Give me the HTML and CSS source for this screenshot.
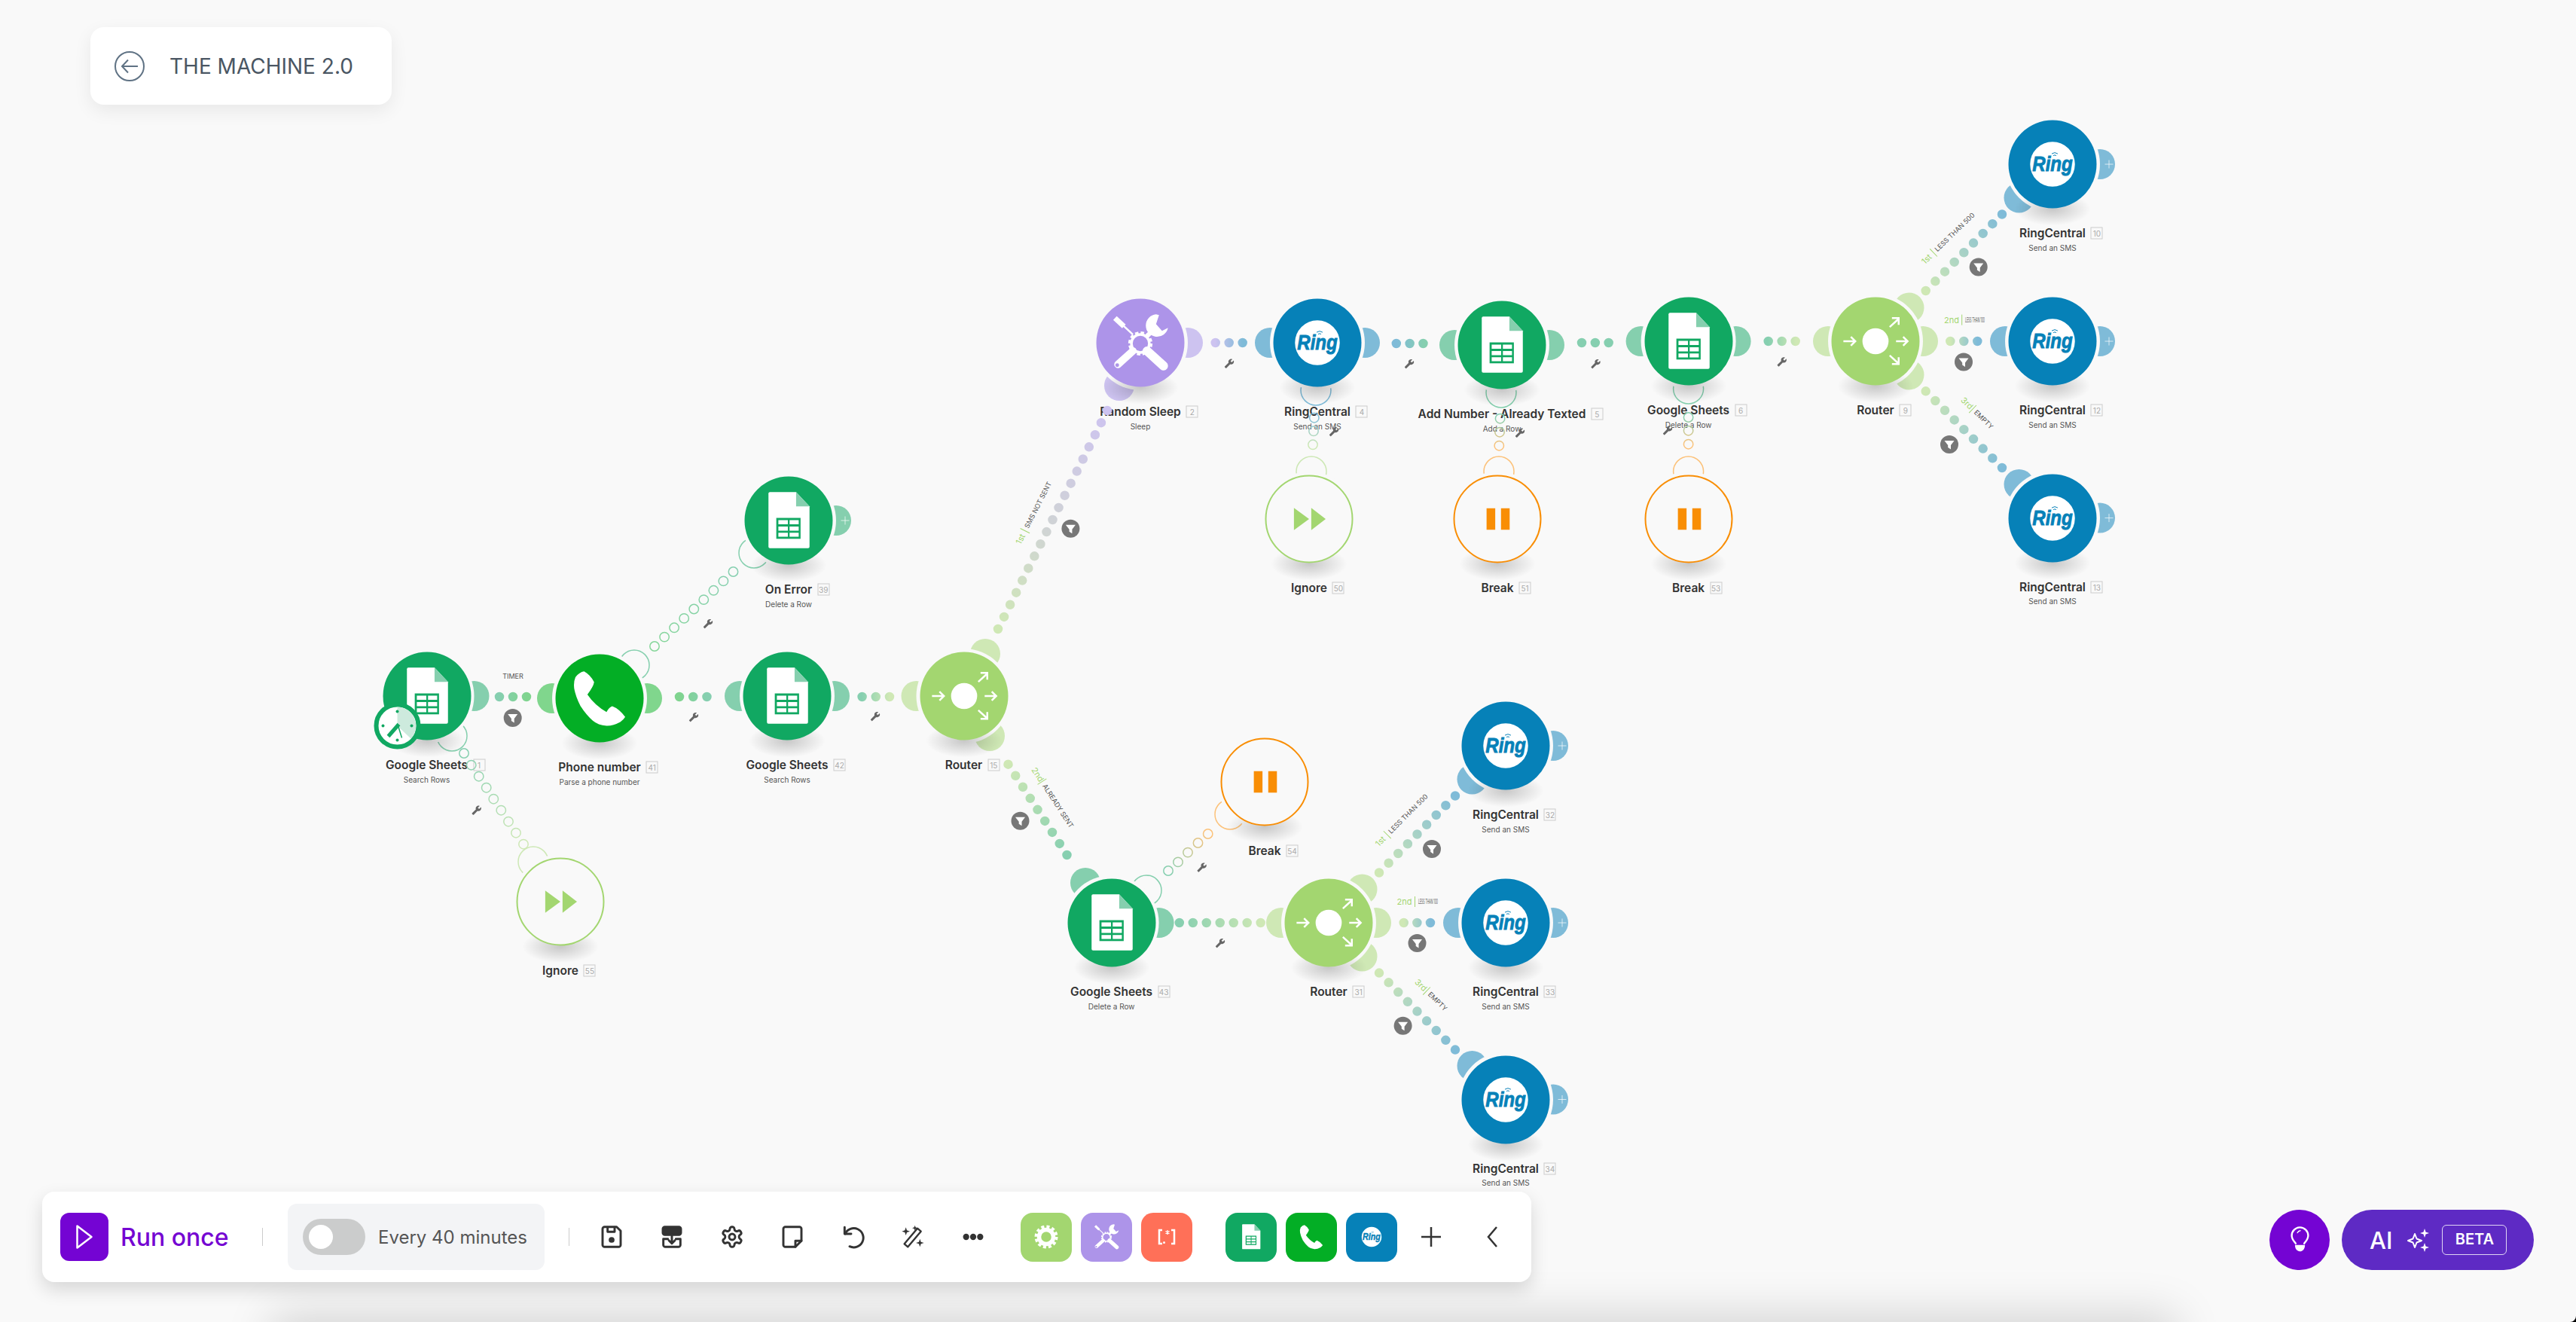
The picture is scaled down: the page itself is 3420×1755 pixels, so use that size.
FILE: index.html
```html
<!DOCTYPE html>
<html lang="en">
<head>
  <meta charset="UTF-8" />
  <title>THE MACHINE 2.0</title>
  <link rel="stylesheet" href="styles.css">
</head>
<body>
  <!-- shared icons and gradients -->
  <svg class="defs" aria-hidden="true">
    <defs>
      <symbol id="sheets" viewBox="-59 -59 118 118">
        <path fill="#fff" d="M-25 -38H10L28 -19V35Q28 37 26 37H-25Q-27 37 -27 35V-36Q-27 -38 -25 -38Z"/>
        <path fill="#85cfae" d="M10 -38L28 -19H10Z"/>
        <rect x="-16.5" y="-3.5" width="32.5" height="28" fill="#11a862"/>
        <path fill="#fff" d="M-13.7 -.5H-1V5H-13.7ZM1.3 -.5H13.5V5H1.3ZM-13.7 8H-1V13.5H-13.7ZM1.3 8H13.5V13.5H1.3ZM-13.7 16.3H-1V21.7H-13.7ZM1.3 16.3H13.5V21.7H1.3Z"/>
      </symbol>
      <symbol id="phone" viewBox="-59 -59 118 118">
        <path fill="#fff" d="M-20.7 -36Q-12 -31 -7.3 -21.7Q-8 -16 -16.3 -5Q-6 10 9.3 18.3Q13 12 17 10.7Q26 14 34.3 25Q32 29 27.7 31.7Q18 37 9.3 36.7Q-2 36 -9 30Q-18 22 -25.7 10Q-32 -2 -34 -13.3Q-35 -22 -32.3 -28.3Q-27 -35 -20.7 -36Z"/>
      </symbol>
      <symbol id="ring" viewBox="-59 -59 118 118">
        <circle r="30" fill="#fff"/>
        <text class="ring-word" y="9.5" text-anchor="middle" textLength="54" lengthAdjust="spacingAndGlyphs">Ring</text>
        <path fill="none" stroke="#0681b8" stroke-width="1" d="M-1 -14Q3 -17 7 -14M1 -11.5Q3 -13 5 -11.5"/>
      </symbol>
      <symbol id="router" viewBox="-59 -59 118 118">
        <circle r="17.5" fill="#fff"/>
        <path fill="none" stroke="#fff" stroke-width="2.5" d="M-43 0H-27M-33 -6L-27 0L-33 6M27.5 0H43M37 -6L43 0L37 6M19 -19L31 -30M22 -31H31V-22M19 19L31 30M22 30.5H31V21.5"/>
      </symbol>
      <symbol id="tools" viewBox="-59 -59 118 118">
        <g stroke="#fff" fill="none">
          <path stroke-width="7" d="M-34 -33L-22 -22"/>
          <path stroke-width="2.5" d="M-23 -23L-10 -11"/>
          <path stroke-width="12" stroke-linecap="round" d="M9 11L31 31"/>
          <path stroke-width="10" stroke-linecap="round" d="M-10 11L-30 29"/>
          <path stroke-width="6" d="M8 -8L16 -16"/>
          <circle cy="1" r="12" stroke-width="3.5"/>
          <circle cy="1" r="14.5" stroke-width="3.5" stroke-dasharray="4.5 3.09"/>
        </g>
        <circle cx="-31" cy="30" r="2.5" fill="#ad94e9"/>
        <path fill="#fff" d="M21 -38A15 15 0 1 0 37 -20L29 -16L21 -25L25 -37Z"/>
      </symbol>
      <symbol id="skip" viewBox="-59 -59 118 118">
        <path fill="#a3d670" d="M-21 -15.5L0 0L-21 15.5ZM3 -15.5L23 0L3 15.5Z"/>
      </symbol>
      <symbol id="pause" viewBox="-59 -59 118 118">
        <path fill="#f98e05" d="M-15 -15H-3V15H-15ZM5 -15H17V15H5Z"/>
      </symbol>
      <symbol id="cog" viewBox="-26 -26 52 52">
        <circle r="9.5" fill="none" stroke="#fff" stroke-width="5.5"/>
        <circle r="13.5" fill="none" stroke="#fff" stroke-width="4" stroke-dasharray="4 3.07"/>
      </symbol>
      <symbol id="array" viewBox="-26 -26 52 52">
        <path fill="none" stroke="#fff" stroke-width="2.5" d="M-6 -9H-10V9H-6M6 -9H10V9H6"/>
        <path fill="none" stroke="#fff" stroke-width="1.3" d="M1 -9V-3M-1.6 -7.5L3.6 -4.5M3.6 -7.5L-1.6 -4.5"/>
        <circle cx="-3.5" cy="7.5" r="1.5" fill="#fff"/>
      </symbol>
      <g id="wrench"><path fill="#666" transform="scale(-.56 .56) translate(-12 -12)" d="M22.7 19l-9.1-9.1c.9-2.3.4-5-1.5-6.9-2-2-5-2.4-7.4-1.3L9 6 6 9 1.6 4.7C.4 7.1.9 10.1 2.9 12.1c1.9 1.9 4.6 2.4 6.9 1.5l9.1 9.1c.4.4 1 .4 1.4 0l2.3-2.3c.5-.4.5-1.1.1-1.4z"/></g>
      <g id="funnel"><circle r="12" fill="#777"/><path fill="#fff" d="M-6.5 -5H6.5L2 1V6.5L-1.8 4V1Z"/></g>

      <linearGradient id="to-blue"><stop offset="0" stop-color="#cfe8b5"/><stop offset="1" stop-color="#7fbbd8"/></linearGradient>
      <linearGradient id="to-sheet"><stop offset="0" stop-color="#cfe8b5"/><stop offset="1" stop-color="#86cfb0"/></linearGradient>
      <linearGradient id="g1" gradientUnits="userSpaceOnUse" x1="663" y1="925" x2="699" y2="925"><stop offset="0" stop-color="#86cfb0"/><stop offset="1" stop-color="#80d48f"/></linearGradient>
      <linearGradient id="g2" gradientUnits="userSpaceOnUse" x1="902" y1="925" x2="938" y2="925"><stop offset="0" stop-color="#80d48f"/><stop offset="1" stop-color="#86cfb0"/></linearGradient>
      <linearGradient id="g3" href="#to-sheet" gradientUnits="userSpaceOnUse" x1="1181" y1="925" x2="1144" y2="925"/>
      <linearGradient id="g4" gradientUnits="userSpaceOnUse" x1="1325" y1="835" x2="1470" y2="545"><stop offset="0" stop-color="#cfe8b5"/><stop offset=".45" stop-color="#d0d4d4"/><stop offset="1" stop-color="#cdc3f0"/></linearGradient>
      <linearGradient id="g5" href="#to-sheet" gradientUnits="userSpaceOnUse" x1="1338" y1="1014" x2="1416" y2="1135"/>
      <linearGradient id="g6" href="#to-sheet" gradientUnits="userSpaceOnUse" x1="1674" y1="1225" x2="1565" y2="1225"/>
      <linearGradient id="g7" gradientUnits="userSpaceOnUse" x1="1613" y1="455" x2="1650" y2="455"><stop offset="0" stop-color="#cdc3f0"/><stop offset="1" stop-color="#7fbbd8"/></linearGradient>
      <linearGradient id="g8" gradientUnits="userSpaceOnUse" x1="1854" y1="456" x2="1890" y2="456"><stop offset="0" stop-color="#7fbbd8"/><stop offset="1" stop-color="#86cfb0"/></linearGradient>
      <linearGradient id="g9" href="#to-sheet" gradientUnits="userSpaceOnUse" x1="2384" y1="453" x2="2347" y2="453"/>
      <linearGradient id="g10" href="#to-blue" gradientUnits="userSpaceOnUse" x1="2557" y1="386" x2="2658" y2="284"/>
      <linearGradient id="g11" href="#to-blue" gradientUnits="userSpaceOnUse" x1="2589" y1="453" x2="2625" y2="453"/>
      <linearGradient id="g12" href="#to-blue" gradientUnits="userSpaceOnUse" x1="2557" y1="519" x2="2658" y2="621"/>
      <linearGradient id="g13" href="#to-blue" gradientUnits="userSpaceOnUse" x1="1831" y1="1158" x2="1932" y2="1056"/>
      <linearGradient id="g14" href="#to-blue" gradientUnits="userSpaceOnUse" x1="1864" y1="1225" x2="1899" y2="1225"/>
      <linearGradient id="g15" href="#to-blue" gradientUnits="userSpaceOnUse" x1="1831" y1="1292" x2="1932" y2="1394"/>
      <linearGradient id="h1" gradientUnits="userSpaceOnUse" x1="869" y1="858" x2="973" y2="759"><stop offset="0" stop-color="#86d69a"/><stop offset="1" stop-color="#86cfb0"/></linearGradient>
      <linearGradient id="h2" href="#to-sheet" gradientUnits="userSpaceOnUse" x1="695" y1="1120" x2="616" y2="1000"/>
      <linearGradient id="h3" gradientUnits="userSpaceOnUse" x1="1551" y1="1156" x2="1604" y2="1107"><stop offset="0" stop-color="#86cfb0"/><stop offset="1" stop-color="#fcc27a"/></linearGradient>
      <linearGradient id="h4" gradientUnits="userSpaceOnUse" x1="1745" y1="554" x2="1743" y2="591"><stop offset="0" stop-color="#7fbbd8"/><stop offset="1" stop-color="#cde8b5"/></linearGradient>
      <linearGradient id="h5" gradientUnits="userSpaceOnUse" x1="1992" y1="555" x2="1990" y2="592"><stop offset="0" stop-color="#86cfb0"/><stop offset="1" stop-color="#fcc27a"/></linearGradient>
      <linearGradient id="h6" gradientUnits="userSpaceOnUse" x1="2242" y1="554" x2="2241" y2="590"><stop offset="0" stop-color="#86cfb0"/><stop offset="1" stop-color="#fcc27a"/></linearGradient>
    </defs>
  </svg>

  <main class="canvas">
    <!-- handles sit under the modules, each module masks them with a ring of page colour -->
    <svg class="layer" viewBox="0 0 3420 1755">
      <g class="ear sheet">
        <circle cx="629.5" cy="924"/><circle cx="982" cy="924"/><circle cx="1108" cy="924"/><circle cx="1110" cy="691"/>
        <circle cx="1931" cy="458"/><circle cx="2057" cy="458"/><circle cx="2178.6" cy="453"/><circle cx="2304.6" cy="453"/>
        <circle cx="1441" cy="1172"/><circle cx="1538.6" cy="1225"/>
      </g>
      <g class="ear phone"><circle cx="733" cy="927"/><circle cx="859" cy="927"/></g>
      <g class="ear router">
        <circle cx="1216.5" cy="924"/><circle cx="1308" cy="868"/><circle cx="1314" cy="977"/>
        <circle cx="2427" cy="453"/><circle cx="2553" cy="453"/><circle cx="2534.5" cy="408.5"/><circle cx="2534.5" cy="497.5"/>
        <circle cx="1701" cy="1225"/><circle cx="1827" cy="1225"/><circle cx="1808.5" cy="1180.5"/><circle cx="1808.5" cy="1269.5"/>
      </g>
      <g class="ear sleep"><circle cx="1577" cy="455"/><circle cx="1486" cy="512"/></g>
      <g class="ear ring">
        <circle cx="1686" cy="455"/><circle cx="1812" cy="455"/>
        <circle cx="2788" cy="218"/><circle cx="2680.5" cy="262.5"/><circle cx="2662" cy="453"/><circle cx="2788" cy="453"/><circle cx="2680.5" cy="643"/><circle cx="2788" cy="687.6"/>
        <circle cx="1954.5" cy="1034.5"/><circle cx="2062" cy="990"/><circle cx="1936" cy="1225"/><circle cx="2062" cy="1225"/><circle cx="1954.5" cy="1415"/><circle cx="2062" cy="1459.5"/>
      </g>
      <g class="ear-open">
        <circle cx="600" cy="977" stroke="#85cfae"/><circle cx="842" cy="883" stroke="#85cfae"/><circle cx="1001" cy="734" stroke="#85cfae"/>
        <circle cx="708" cy="1144" stroke="#cde8b5"/><circle cx="1747" cy="518" stroke="#7fbbd8"/><circle cx="1741" cy="626" stroke="#cde8b5"/>
        <circle cx="1993" cy="521" stroke="#85cfae"/><circle cx="1990" cy="626" stroke="#fcc27a"/><circle cx="2241.6" cy="516" stroke="#85cfae"/>
        <circle cx="2241.6" cy="626" stroke="#fcc27a"/><circle cx="1522" cy="1182" stroke="#85cfae"/><circle cx="1633" cy="1081" stroke="#fcc27a"/>
      </g>
      <g class="mask">
        <circle cx="566.5" cy="924"/><circle cx="796" cy="927"/><circle cx="1045" cy="924"/><circle cx="1279.5" cy="924"/><circle cx="1047" cy="691"/><circle cx="744" cy="1197"/>
        <circle cx="1514" cy="455"/><circle cx="1749" cy="455"/><circle cx="1994" cy="458"/><circle cx="2241.6" cy="453"/><circle cx="2490" cy="453"/>
        <circle cx="2725" cy="218"/><circle cx="2725" cy="453"/><circle cx="2725" cy="687.6"/><circle cx="1738" cy="689"/><circle cx="1988" cy="689"/><circle cx="2241.6" cy="689"/>
        <circle cx="1475.6" cy="1225"/><circle cx="1764" cy="1225"/><circle cx="1679" cy="1038"/><circle cx="1999" cy="990"/><circle cx="1999" cy="1225"/><circle cx="1999" cy="1459.5"/>
      </g>
    </svg>

    <div class="node m1">
      <div class="disc c-sheet"><svg class="icon"><use href="#sheets"/></svg></div>
      <div class="name">Google Sheets<span class="num">1</span></div>
      <div class="sub">Search Rows</div>
      <svg class="clock" viewBox="-32 -32 64 64">
        <circle r="28" fill="#fff" stroke="#11a862" stroke-width="6"/>
        <path fill="#cdeadd" d="M0 0V-25A25 25 0 0 1 18 17Z"/>
        <g fill="#11a862"><circle cy="-19" r="2"/><circle cx="19" r="2"/><circle cy="19" r="2"/><circle cx="-19" r="2"/></g>
        <path stroke="#11a862" stroke-width="5" d="M2 -2L-12 14"/>
        <path stroke="#11a862" stroke-width="1.5" d="M1 0L6 16"/>
      </svg>
    </div>
    <div class="node m41">
      <div class="disc c-phone"><svg class="icon"><use href="#phone"/></svg></div>
      <div class="name">Phone number<span class="num">41</span></div>
      <div class="sub">Parse a phone number</div>
    </div>
    <div class="node m42">
      <div class="disc c-sheet"><svg class="icon"><use href="#sheets"/></svg></div>
      <div class="name">Google Sheets<span class="num">42</span></div>
      <div class="sub">Search Rows</div>
    </div>
    <div class="node m15">
      <div class="disc c-router"><svg class="icon"><use href="#router"/></svg></div>
      <div class="name">Router<span class="num">15</span></div>
    </div>
    <div class="node m39">
      <div class="disc c-sheet"><svg class="icon"><use href="#sheets"/></svg></div>
      <div class="name">On Error<span class="num">39</span></div>
      <div class="sub">Delete a Row</div>
    </div>
    <div class="node m55">
      <div class="disc ghost-green"><svg class="icon"><use href="#skip"/></svg></div>
      <div class="name">Ignore<span class="num">55</span></div>
    </div>
    <div class="node m2">
      <div class="disc c-sleep"><svg class="icon"><use href="#tools"/></svg></div>
      <div class="name">Random Sleep<span class="num">2</span></div>
      <div class="sub">Sleep</div>
    </div>
    <div class="node m4">
      <div class="disc c-ring"><svg class="icon"><use href="#ring"/></svg></div>
      <div class="name">RingCentral<span class="num">4</span></div>
      <div class="sub">Send an SMS</div>
    </div>
    <div class="node m5">
      <div class="disc c-sheet"><svg class="icon"><use href="#sheets"/></svg></div>
      <div class="name">Add Number - Already Texted<span class="num">5</span></div>
      <div class="sub">Add a Row</div>
    </div>
    <div class="node m6">
      <div class="disc c-sheet"><svg class="icon"><use href="#sheets"/></svg></div>
      <div class="name">Google Sheets<span class="num">6</span></div>
      <div class="sub">Delete a Row</div>
    </div>
    <div class="node m9">
      <div class="disc c-router"><svg class="icon"><use href="#router"/></svg></div>
      <div class="name">Router<span class="num">9</span></div>
    </div>
    <div class="node m10">
      <div class="disc c-ring"><svg class="icon"><use href="#ring"/></svg></div>
      <div class="name">RingCentral<span class="num">10</span></div>
      <div class="sub">Send an SMS</div>
    </div>
    <div class="node m12">
      <div class="disc c-ring"><svg class="icon"><use href="#ring"/></svg></div>
      <div class="name">RingCentral<span class="num">12</span></div>
      <div class="sub">Send an SMS</div>
    </div>
    <div class="node m13">
      <div class="disc c-ring"><svg class="icon"><use href="#ring"/></svg></div>
      <div class="name">RingCentral<span class="num">13</span></div>
      <div class="sub">Send an SMS</div>
    </div>
    <div class="node m50">
      <div class="disc ghost-green"><svg class="icon"><use href="#skip"/></svg></div>
      <div class="name">Ignore<span class="num">50</span></div>
    </div>
    <div class="node m51">
      <div class="disc ghost-orange"><svg class="icon"><use href="#pause"/></svg></div>
      <div class="name">Break<span class="num">51</span></div>
    </div>
    <div class="node m53">
      <div class="disc ghost-orange"><svg class="icon"><use href="#pause"/></svg></div>
      <div class="name">Break<span class="num">53</span></div>
    </div>
    <div class="node m54">
      <div class="disc ghost-orange"><svg class="icon"><use href="#pause"/></svg></div>
      <div class="name">Break<span class="num">54</span></div>
    </div>
    <div class="node m43">
      <div class="disc c-sheet"><svg class="icon"><use href="#sheets"/></svg></div>
      <div class="name">Google Sheets<span class="num">43</span></div>
      <div class="sub">Delete a Row</div>
    </div>
    <div class="node m31">
      <div class="disc c-router"><svg class="icon"><use href="#router"/></svg></div>
      <div class="name">Router<span class="num">31</span></div>
    </div>
    <div class="node m32">
      <div class="disc c-ring"><svg class="icon"><use href="#ring"/></svg></div>
      <div class="name">RingCentral<span class="num">32</span></div>
      <div class="sub">Send an SMS</div>
    </div>
    <div class="node m33">
      <div class="disc c-ring"><svg class="icon"><use href="#ring"/></svg></div>
      <div class="name">RingCentral<span class="num">33</span></div>
      <div class="sub">Send an SMS</div>
    </div>
    <div class="node m34">
      <div class="disc c-ring"><svg class="icon"><use href="#ring"/></svg></div>
      <div class="name">RingCentral<span class="num">34</span></div>
      <div class="sub">Send an SMS</div>
    </div>

    <!-- links, filters and route labels -->
    <svg class="layer" viewBox="0 0 3420 1755">
      <g class="dots">
        <line x1="663" y1="925" x2="699" y2="925" pathLength="2.001" stroke="url(#g1)"/>
        <line x1="902" y1="925" x2="938.5" y2="925" pathLength="2.001" stroke="url(#g2)"/>
        <line x1="1144.6" y1="925" x2="1181" y2="925" pathLength="2.001" stroke="url(#g3)"/>
        <line x1="1325" y1="835" x2="1470" y2="545" pathLength="18.001" stroke="url(#g4)"/>
        <line x1="1338.5" y1="1014.7" x2="1416.5" y2="1135" pathLength="8.001" stroke="url(#g5)"/>
        <line x1="1565.8" y1="1225" x2="1673.7" y2="1225" pathLength="6.001" stroke="url(#g6)"/>
        <line x1="1613.7" y1="455" x2="1649.7" y2="455" pathLength="2.001" stroke="url(#g7)"/>
        <line x1="1853.8" y1="456" x2="1889.5" y2="456" pathLength="2.001" stroke="url(#g8)"/>
        <line x1="2100" y1="455" x2="2135.7" y2="455" pathLength="2.001" stroke="#86cfb0"/>
        <line x1="2347.7" y1="453" x2="2383.7" y2="453" pathLength="2.001" stroke="url(#g9)"/>
        <line x1="2556.7" y1="386" x2="2658" y2="284.5" pathLength="8.001" stroke="url(#g10)"/>
        <line x1="2589.3" y1="453" x2="2625.3" y2="453" pathLength="2.001" stroke="url(#g11)"/>
        <line x1="2556.7" y1="519.3" x2="2658" y2="621" pathLength="8.001" stroke="url(#g12)"/>
        <line x1="1831" y1="1158.5" x2="1932" y2="1056.5" pathLength="8.001" stroke="url(#g13)"/>
        <line x1="1863.7" y1="1225" x2="1899" y2="1225" pathLength="2.001" stroke="url(#g14)"/>
        <line x1="1831" y1="1291.6" x2="1932" y2="1393.6" pathLength="8.001" stroke="url(#g15)"/>
      </g>
      <g class="rings" stroke="url(#h1)">
        <circle cx="869" cy="858"/><circle cx="882.1" cy="845.6"/><circle cx="895.1" cy="833.3"/><circle cx="908.2" cy="820.9"/><circle cx="921.3" cy="808.5"/><circle cx="934.3" cy="796.1"/><circle cx="947.4" cy="783.8"/><circle cx="960.4" cy="771.4"/><circle cx="973.5" cy="759"/>
      </g>
      <g class="rings" stroke="url(#h2)">
        <circle cx="616" cy="1000"/><circle cx="625.7" cy="1015.7"/><circle cx="635.7" cy="1030.7"/><circle cx="645.7" cy="1045.7"/><circle cx="655.3" cy="1060.7"/><circle cx="665.3" cy="1075.7"/><circle cx="675" cy="1090.7"/><circle cx="685" cy="1105.7"/><circle cx="695" cy="1120.7"/>
      </g>
      <g class="rings" stroke="url(#h3)">
        <circle cx="1551" cy="1156"/><circle cx="1564" cy="1144.4"/><circle cx="1577" cy="1131.6"/><circle cx="1590.5" cy="1119"/><circle cx="1603.7" cy="1107"/>
      </g>
      <g class="rings" stroke="url(#h4)"><circle cx="1744.8" cy="554.7"/><circle cx="1744" cy="572.3"/><circle cx="1743" cy="590.3"/></g>
      <g class="rings" stroke="url(#h5)"><circle cx="1991.6" cy="555.7"/><circle cx="1991" cy="573.7"/><circle cx="1990.3" cy="591.7"/></g>
      <g class="rings" stroke="url(#h6)"><circle cx="2241.6" cy="554"/><circle cx="2241.6" cy="571.7"/><circle cx="2241.6" cy="589.7"/></g>

      <g class="plus">
        <path d="M1116.5 691h11M1122 685.5v11"/><path d="M2794.5 218h11M2800 212.5v11"/><path d="M2794.5 453h11M2800 447.5v11"/><path d="M2794.5 687.6h11M2800 682.1v11"/>
        <path d="M2068.5 990h11M2074 984.5v11"/><path d="M2068.5 1225h11M2074 1219.5v11"/><path d="M2068.5 1459.5h11M2074 1454v11"/>
      </g>

      <use href="#wrench" x="921" y="952"/><use href="#wrench" x="1162" y="951"/><use href="#wrench" x="940" y="828"/><use href="#wrench" x="632.7" y="1075.7"/>
      <use href="#wrench" x="1632" y="482.7"/><use href="#wrench" x="1871" y="483"/><use href="#wrench" x="2118.5" y="483"/><use href="#wrench" x="2365.7" y="480.4"/>
      <use href="#wrench" x="1620" y="1252"/><use href="#wrench" x="1595.6" y="1151.5"/><use href="#wrench" x="1771" y="573"/><use href="#wrench" x="2018" y="574.7"/><use href="#wrench" x="2214" y="571.3"/>

      <use href="#funnel" x="680.7" y="953"/><use href="#funnel" x="1421.4" y="701.7"/><use href="#funnel" x="1354.5" y="1089.7"/>
      <use href="#funnel" x="2626.7" y="354.5"/><use href="#funnel" x="2607" y="480.4"/><use href="#funnel" x="2588" y="590"/>
      <use href="#funnel" x="1901" y="1127"/><use href="#funnel" x="1881.5" y="1252"/><use href="#funnel" x="1862.6" y="1361.7"/>

      <text class="route-t" x="681" y="901" text-anchor="middle">TIMER</text>

      <g class="route" transform="translate(1352 722) rotate(-63)">
        <text class="route-n" y="3.5">1st</text><path d="M19.5 -7V7"/><text class="route-t" x="24" y="3">SMS NOT SENT</text>
      </g>
      <g class="route" transform="translate(1372 1020) rotate(57)">
        <text class="route-n" y="3.5">2nd</text><path d="M21 -7V7"/><text class="route-t" x="26" y="3">ALREADY SENT</text>
      </g>
      <g class="route" transform="translate(2553 349) rotate(-44)">
        <text class="route-n" y="3.5">1st</text><path d="M19.5 -7V7"/><text class="route-t" x="24" y="3">LESS THAN 500</text>
      </g>
      <g class="route" transform="translate(2581 428.6)">
        <text class="route-n">2nd</text><path d="M23.7 -11V3"/><text class="route-t" x="28" y="-1" textLength="26" lengthAdjust="spacingAndGlyphs">LESS THAN 100</text>
      </g>
      <g class="route" transform="translate(2605 529.5) rotate(44)">
        <text class="route-n" y="3.5">3rd</text><path d="M19.5 -7V7"/><text class="route-t" x="24" y="3">EMPTY</text>
      </g>
      <g class="route" transform="translate(1828 1122) rotate(-45)">
        <text class="route-n" y="3.5">1st</text><path d="M19.5 -7V7"/><text class="route-t" x="24" y="3">LESS THAN 500</text>
      </g>
      <g class="route" transform="translate(1854.5 1201)">
        <text class="route-n">2nd</text><path d="M24 -11V3"/><text class="route-t" x="28.5" y="-1" textLength="26" lengthAdjust="spacingAndGlyphs">LESS THAN 100</text>
      </g>
      <g class="route" transform="translate(1880 1302) rotate(44)">
        <text class="route-n" y="3.5">3rd</text><path d="M19.5 -7V7"/><text class="route-t" x="24" y="3">EMPTY</text>
      </g>
    </svg>

    <div class="under-glow"></div>

    <header class="title-card">
      <svg class="back" viewBox="0 0 40 40"><circle cx="20" cy="20" r="19"/><path d="M31 20H10M18 11.5L10 20L18 28.5"/></svg>
      <span class="title">THE MACHINE 2.0</span>
    </header>

    <div class="toolbar">
      <button class="run-btn"><svg viewBox="0 0 64 64"><path d="M22.5 17.5V46.5L41.5 32Z"/></svg></button>
      <span class="run-label">Run once</span>
      <span class="sep"></span>
      <div class="schedule">
        <span class="toggle"></span>
        <span class="every">Every 40 minutes</span>
      </div>
      <span class="sep sep-2"></span>
      <div class="tools">
        <span class="tool"><svg viewBox="0 0 24 24"><path d="M5 2h12l4 4v14a2 2 0 0 1-2 2H5a2 2 0 0 1-2-2V4a2 2 0 0 1 2-2z"/><path d="M8 2.5V7h7V2.5"/><circle class="solid" cx="12" cy="15" r="1.8"/></svg></span>
        <span class="tool"><svg viewBox="0 0 24 24"><rect class="solid" x="3" y="2" width="18" height="8" rx="2"/><path d="M8 14H3.5v6a2 2 0 0 0 2 2h13a2 2 0 0 0 2-2v-6H16"/><path d="M12 10v8M9 15.5l3 3 3-3"/></svg></span>
        <span class="tool"><svg viewBox="0 0 24 24"><path d="M12.22 2h-.44a2 2 0 0 0-2 2v.18a2 2 0 0 1-1 1.73l-.43.25a2 2 0 0 1-2 0l-.15-.08a2 2 0 0 0-2.73.73l-.22.38a2 2 0 0 0 .73 2.73l.15.1a2 2 0 0 1 1 1.72v.51a2 2 0 0 1-1 1.74l-.15.09a2 2 0 0 0-.73 2.73l.22.38a2 2 0 0 0 2.73.73l.15-.08a2 2 0 0 1 2 0l.43.25a2 2 0 0 1 1 1.73V20a2 2 0 0 0 2 2h.44a2 2 0 0 0 2-2v-.18a2 2 0 0 1 1-1.73l.43-.25a2 2 0 0 1 2 0l.15.08a2 2 0 0 0 2.73-.73l.22-.39a2 2 0 0 0-.73-2.73l-.15-.08a2 2 0 0 1-1-1.74v-.5a2 2 0 0 1 1-1.74l.15-.09a2 2 0 0 0 .73-2.73l-.22-.38a2 2 0 0 0-2.73-.73l-.15.08a2 2 0 0 1-2 0l-.43-.25a2 2 0 0 1-1-1.73V4a2 2 0 0 0-2-2z"/><circle cx="12" cy="12" r="3"/></svg></span>
        <span class="tool"><svg viewBox="0 0 24 24"><path d="M5 2h14a2 2 0 0 1 2 2v12l-6 6H5a2 2 0 0 1-2-2V4a2 2 0 0 1 2-2z"/><path d="M15 22v-6h6"/></svg></span>
        <span class="tool"><svg viewBox="0 0 24 24"><path d="M4 2.5v6.500h6.500"/><path d="M4.5 9A9.5 9.5 0 1 1 9 21.5"/></svg></span>
        <span class="tool"><svg viewBox="0 0 24 24"><path class="thin" d="M16.5 3.5l3.5 3L7 22l-3.500-3z"/><path class="solid-star" d="M5 2.500l1 3 3 1-3 1-1 3-1-3-3-1 3-1zM14 .5l.7 2 2 .7-2 .7-.7 2-.7-2-2-.7 2-.7zM19 14l1 3 3 1-3 1-1 3-1-3-3-1 3-1z"/></svg></span>
        <span class="tool"><svg viewBox="0 0 24 24"><circle class="solid" cx="5" cy="12" r="2"/><circle class="solid" cx="12" cy="12" r="2"/><circle class="solid" cx="19" cy="12" r="2"/></svg></span>
      </div>
      <div class="tiles">
        <span class="tile c-router"><svg class="tile-cog"><use href="#cog"/></svg></span>
        <span class="tile c-sleep"><svg><use href="#tools"/></svg></span>
        <span class="tile c-array"><svg><use href="#array"/></svg></span>
      </div>
      <div class="tiles tiles-apps">
        <span class="tile c-sheet"><svg><use href="#sheets"/></svg></span>
        <span class="tile c-phone"><svg><use href="#phone"/></svg></span>
        <span class="tile c-ring"><svg><use href="#ring"/></svg></span>
      </div>
      <span class="bar-btn add"><svg viewBox="0 0 28 28"><path d="M14 1V27M1 14H27"/></svg></span>
      <span class="bar-btn collapse"><svg viewBox="0 0 28 28"><path d="M20 1L9 14L20 27"/></svg></span>
    </div>

    <div class="help">
      <button class="bulb">
        <svg viewBox="0 0 28 38"><path d="M8 24C5 20 2.5 18 2.5 13a11.5 11.5 0 0 1 23 0c0 5-2.500 7-5.500 11"/><path class="glint" d="M10.5 9a5 5 0 0 1 4-3"/><path class="base" d="M7 26H21C21 32 17.5 35 14 35C10.5 35 7 32 7 26Z"/></svg>
      </button>
      <button class="ai">
        <span class="ai-text">AI</span>
        <svg viewBox="0 0 32 32"><path class="star-line" d="M12 8l2.500 6.500 6.500 2.500-6.500 2.500L12 26l-2.500-6.500L3 17l6.500-2.500z"/><path class="star-fill" d="M25 1l1.500 4.500L31 7l-4.500 1.500L25 13l-1.500-4.500L19 7l4.500-1.500zM25 20l1.500 4.500L31 26l-4.500 1.500L25 32l-1.500-4.500L19 26l4.500-1.500z"/></svg>
        <span class="beta">BETA</span>
      </button>
    </div>
  </main>
</body>
</html>
```

FILE: styles.css
```css
* {
  box-sizing: border-box;
}

html {
  background-color: #000;
}

body {
  margin: 0;
  font-family: Inter, 'Noto Sans', sans-serif;
  color: #333;
}

.defs {
  position: absolute;
  width: 0;
  height: 0;
}

.canvas {
  position: relative;
  width: 3420px;
  height: 1755px;
  overflow: hidden;
  background-color: #f9f9f9;
  border-bottom-right-radius: 8px;
}

.layer {
  position: absolute;
  left: 0;
  top: 0;
  width: 3420px;
  height: 1755px;
  pointer-events: none;
}

/* Handles */
.ear circle { r: 20px; }
.ear.sheet { fill: #85cfae; }
.ear.phone { fill: #80d68d; }
.ear.router { fill: #cfe8b5; }
.ear.sleep { fill: #cdc3f0; }
.ear.ring { fill: #7fbbd8; }

.ear-open circle {
  r: 20px;
  fill: none;
  stroke-width: 1.5;
}

.mask circle {
  r: 63px;
  fill: #f9f9f9;
}

/* Modules */
.node {
  position: absolute;
  width: 117px;
  height: 117px;
  transform: translate(-58.5px, -58.5px);
  display: flex;
  flex-direction: column;
  align-items: center;
}

.node::before {
  content: "";
  position: absolute;
  left: 8px;
  top: 96px;
  width: 101px;
  height: 44px;
  background: radial-gradient(ellipse closest-side, rgba(0,0,0,0.2), rgba(0,0,0,0));
}

.disc {
  position: relative;
  flex: none;
  width: 117px;
  height: 117px;
  border-radius: 50%;
}

.icon {
  display: block;
  width: 100%;
  height: 100%;
}

.c-sheet { background-color: #11a862; }
.c-phone { background-color: #03ae25; }
.c-router { background-color: #a3d670; }
.c-sleep { background-color: #ad94e9; }
.c-ring { background-color: #0681b8; }
.c-array { background-color: #ff7058; }

.ghost-green { background-color: #f9f9f9; border: 2px solid #a3d670; }
.ghost-orange { background-color: #f9f9f9; border: 2px solid #f98e05; }

.name {
  position: relative;
  margin-top: 23px;
  font-size: 15.5px;
  line-height: 20px;
  font-weight: 600;
  color: #333;
  white-space: nowrap;
}

.num {
  position: absolute;
  left: 100%;
  top: 2px;
  margin-left: 7px;
  width: 16px;
  height: 16px;
  border: 1px solid #ccc;
  font-size: 10px;
  line-height: 14px;
  font-weight: 400;
  text-align: center;
  color: #aaa;
}

.sub {
  font-size: 10px;
  line-height: 14px;
  margin-top: 1.5px;
  color: #555;
  white-space: nowrap;
}

.clock {
  position: absolute;
  left: -13px;
  top: 66px;
  width: 64px;
  height: 64px;
}

.m1 { left: 566.5px; top: 924px; }
.m41 { left: 796px; top: 927px; }
.m42 { left: 1045px; top: 924px; }
.m15 { left: 1279.5px; top: 924px; }
.m39 { left: 1047px; top: 691px; }
.m55 { left: 744px; top: 1197px; }
.m2 { left: 1514px; top: 455px; }
.m4 { left: 1749px; top: 455px; }
.m5 { left: 1994px; top: 458px; }
.m6 { left: 2241.6px; top: 453px; }
.m9 { left: 2490px; top: 453px; }
.m10 { left: 2725px; top: 218px; }
.m12 { left: 2725px; top: 453px; }
.m13 { left: 2725px; top: 687.6px; }
.m50 { left: 1738px; top: 689px; }
.m51 { left: 1988px; top: 689px; }
.m53 { left: 2241.6px; top: 689px; }
.m54 { left: 1679px; top: 1038px; }
.m43 { left: 1475.6px; top: 1225px; }
.m31 { left: 1764px; top: 1225px; }
.m32 { left: 1999px; top: 990px; }
.m33 { left: 1999px; top: 1225px; }
.m34 { left: 1999px; top: 1459.5px; }

.ring-word {
  font-family: 'Liberation Sans', sans-serif;
  font-size: 28px;
  font-weight: 700;
  font-style: italic;
  fill: #0681b8;
  stroke: #0681b8;
  stroke-width: 0.9;
}

/* Links */
.dots line {
  stroke-width: 12.5;
  stroke-linecap: round;
  stroke-dasharray: 0 1;
}

.rings circle {
  r: 6.2px;
  fill: none;
  stroke-width: 1.5;
}

.plus path {
  fill: none;
  stroke: #fff;
  stroke-opacity: 0.7;
  stroke-width: 1;
}

.route-n {
  font-size: 11px;
  fill: #a3d670;
}

.route-t {
  font-size: 9px;
  fill: #555;
}

.route path {
  fill: none;
  stroke: #a3d670;
  stroke-width: 1;
}

.under-glow {
  position: absolute;
  left: 390px;
  width: 2470px;
  top: 1785px;
  height: 40px;
  box-shadow: 0 -10px 60px 30px rgba(0,0,0,0.15);
}

/* Title card */
.title-card {
  position: absolute;
  left: 120px;
  top: 36px;
  width: 400px;
  height: 103px;
  padding-left: 32px;
  display: flex;
  align-items: center;
  background-color: #fff;
  border-radius: 18px;
  box-shadow: 0 8px 24px rgba(0,0,0,0.07);
}

.back {
  width: 40px;
  height: 40px;
}

.back circle, .back path {
  fill: none;
  stroke: #5f7284;
  stroke-width: 2;
}

.title {
  margin-left: 33px;
  font-size: 28px;
  color: #4a5663;
  white-space: nowrap;
}

/* Bottom toolbar */
.toolbar {
  position: absolute;
  left: 56px;
  top: 1582px;
  width: 1977px;
  height: 120px;
  padding: 0 24px;
  display: flex;
  align-items: center;
  background-color: #fff;
  border-radius: 16px;
  box-shadow: 0 10px 24px rgba(0,0,0,0.14);
}

.run-btn {
  width: 64px;
  height: 64px;
  padding: 0;
  border: none;
  border-radius: 12px;
  background-color: #7404d3;
}

.run-btn svg {
  display: block;
}

.run-btn path {
  fill: none;
  stroke: #fff;
  stroke-width: 2.5;
  stroke-linejoin: round;
}

.run-label {
  margin-left: 16px;
  width: 143px;
  font-size: 32px;
  font-weight: 500;
  color: #7505d2;
  white-space: nowrap;
}

.sep {
  flex: none;
  width: 1px;
  height: 24px;
  margin-left: 45px;
  background-color: #ccc;
}

.sep-2 {
  margin-left: 32px;
}

.schedule {
  flex: none;
  width: 341px;
  height: 88px;
  margin-left: 33px;
  padding-left: 20px;
  display: flex;
  align-items: center;
  background-color: #f3f4f6;
  border-radius: 12px;
}

.toggle {
  position: relative;
  width: 83px;
  height: 48px;
  border-radius: 24px;
  background-color: #cbcccc;
}

.toggle::after {
  content: "";
  position: absolute;
  left: 8px;
  top: 8px;
  width: 32px;
  height: 32px;
  border-radius: 50%;
  background-color: #fff;
}

.every {
  margin-left: 17px;
  font-size: 24px;
  color: #555;
  white-space: nowrap;
}

.tools {
  display: flex;
  margin-left: 16px;
}

.tool {
  width: 80px;
  display: flex;
  justify-content: center;
}

.tool svg {
  width: 32px;
  height: 32px;
  fill: none;
  stroke: #333;
  stroke-width: 2.2;
  stroke-linejoin: round;
  stroke-linecap: round;
}

.tool .solid {
  fill: #333;
}

.tool .thin {
  stroke-width: 1.8;
}

.tool .solid-star {
  fill: #333;
  stroke: none;
}

.tiles {
  display: flex;
  gap: 12px;
  margin-left: 23px;
}

.tiles-apps {
  margin-left: 44px;
}

.tile {
  width: 68px;
  height: 65px;
  border-radius: 16px;
  display: flex;
  align-items: center;
  justify-content: center;
}

.tile svg {
  width: 52px;
  height: 52px;
}

.bar-btn {
  width: 40px;
  display: flex;
  justify-content: center;
}

.bar-btn svg {
  width: 28px;
  height: 28px;
  fill: none;
  stroke: #333;
  stroke-width: 2.5;
}

.add { margin-left: 25px; }
.collapse { margin-left: 41px; }

/* Help and AI buttons */
.help {
  position: absolute;
  left: 3013px;
  top: 1606px;
  display: flex;
  gap: 16px;
}

.bulb {
  width: 80px;
  height: 80px;
  padding: 0;
  border: none;
  border-radius: 50%;
  background-color: #7404d3;
  display: flex;
  align-items: center;
  justify-content: center;
}

.bulb svg {
  width: 27px;
  height: 36px;
}

.bulb path {
  fill: none;
  stroke: #fff;
  stroke-width: 2.5;
  stroke-linecap: round;
}

.bulb .glint {
  stroke-width: 1.5;
}

.bulb .base {
  fill: #fff;
  stroke: none;
}

.ai {
  width: 255px;
  height: 80px;
  padding: 0 0 0 37px;
  border: none;
  border-radius: 40px;
  background-color: #5e2ac4;
  color: #fff;
  display: flex;
  align-items: center;
  font-family: inherit;
}

.ai-text {
  font-size: 31px;
  font-weight: 500;
}

.ai svg {
  width: 32px;
  height: 32px;
  margin-left: 18px;
}

.star-line {
  fill: none;
  stroke: #fff;
  stroke-width: 2;
  stroke-linejoin: round;
}

.star-fill {
  fill: #fff;
}

.beta {
  width: 86px;
  height: 40px;
  margin-left: 16px;
  border: 1.5px solid rgba(255,255,255,0.8);
  border-radius: 6px;
  font-size: 20px;
  font-weight: 600;
  line-height: 37px;
  text-align: center;
}
```
